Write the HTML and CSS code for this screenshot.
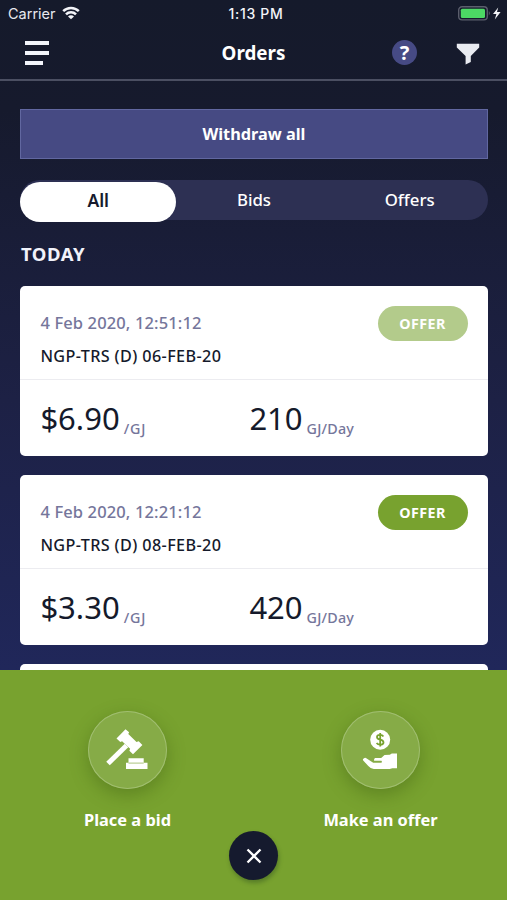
FILE: index.html
```html
<!DOCTYPE html>
<html lang="en">
<head>
<meta charset="utf-8">
<title>Orders</title>
<link rel="stylesheet" href="styles.css">
</head>
<body>
<div class="app">
  <div class="status">
    <div class="carrier"><span class="carrier-name">Carrier</span>
      <svg width="18" height="14" viewBox="0 0 18 14" fill="none" stroke="#f3f4f8" stroke-width="2.5"><path d="M1.2 5.2a11 11 0 0 1 15.6 0M4 8.4a7 7 0 0 1 10 0"/><path d="M9 13.3 6 10.6a4 4 0 0 1 6 0z" fill="#f3f4f8" stroke="none"/></svg>
    </div>
    <div class="clock">1:13 PM</div>
    <div class="power">
      <svg width="44" height="16" viewBox="0 0 44 16"><rect x=".7" y="1.7" width="28.6" height="13.2" rx="3.4" fill="none" stroke="#5b5e6c" stroke-width="1.4"/><rect x="2.8" y="3.7" width="24.2" height="9.2" rx="1.5" fill="#4cd964"/><path d="M30.8 6q2 2.2 0 4.5z" fill="#5b5e6c"/><path d="M40.2 2.5 35 9h3.4l-1.6 5.5 5.8-7.4h-3.6z" fill="#f3f4f8"/></svg>
    </div>
  </div>
  <header class="nav">
    <div class="menu"><i></i><i></i><i class="short"></i></div>
    <h1>Orders</h1>
    <div class="tools"><span class="help">?</span>
      <svg width="24" height="22" viewBox="0 0 24 22" fill="#e9ebf1"><path d="M.8.8h22.4v3.6L14.8 13v6l-5.2 2.4V13L.8 4.4z"/></svg>
    </div>
  </header>
  <main>
    <button class="withdraw"><span>Withdraw all</span></button>
    <div class="tabs"><div class="tab active"><span>All</span></div><div class="tab"><span>Bids</span></div><div class="tab"><span>Offers</span></div></div>
    <h2>TODAY</h2>
    <article class="card">
      <div class="top"><div><p class="date">4 Feb 2020, 12:51:12</p><p class="product">NGP-TRS (D) 06-FEB-20</p></div><span class="tag faded">OFFER</span></div>
      <div class="figures"><div><span class="amount">$6.90</span><span class="unit gas">/GJ</span></div><div><span class="amount">210</span><span class="unit">GJ/Day</span></div></div>
    </article>
    <article class="card">
      <div class="top"><div><p class="date">4 Feb 2020, 12:21:12</p><p class="product">NGP-TRS (D) 08-FEB-20</p></div><span class="tag">OFFER</span></div>
      <div class="figures"><div><span class="amount">$3.30</span><span class="unit gas">/GJ</span></div><div><span class="amount">420</span><span class="unit">GJ/Day</span></div></div>
    </article>
    <article class="card"></article>
  </main>
  <footer class="sheet">
    <div class="actions">
      <div class="action">
        <div class="disc"><svg width="78" height="78" viewBox="0 0 78 78" fill="#fff"><path d="M20 52.5 38.5 34.5" stroke="#fff" stroke-width="5" fill="none"/><path d="m37.5 18.2 3.6 3-.8 1.7 8.2 8.2 2.2-.8 3.7 3.6-9.4 9.4-3.6-3.6.7-2-8-7.4-1.8.7-3.8-3.4z"/><path d="M40.5 47.3h15.2v4.5h3.8V58H38v-6.2h2.5z"/><path d="M40.5 52.1h15.2" stroke="#86ab47" stroke-width=".7"/></svg></div>
        <span class="bid">Place a bid</span>
      </div>
      <div class="action">
        <div class="disc"><svg width="78" height="78" viewBox="0 0 78 78"><circle cx="39.2" cy="28.7" r="10" fill="#fff"/><path d="M42.4 25.4q-1-1.6-3.4-1.6-3 0-3 2.3 0 1.9 3.1 2.6 3.4.7 3.4 2.8 0 2.2-3.3 2.2-2.4 0-3.6-1.7M39.2 22v13.4" fill="none" stroke="#78a22f" stroke-width="1.8"/><path d="M23 47.2q1.2-.8 2.7.2l6.5 4.3h8.2q1-1 0-1.9h-7.2q-.6-1.2.8-2.7h6.2l3.3-3.2 5.3-.2 2-1.2H56v14.7h-4.6l-2.8.9H32.8q-3.2-.2-5.5-3L22 49.2q-.5-1.2 1-2z" fill="#fff"/></svg></div>
        <span class="make">Make an offer</span>
      </div>
    </div>
    <div class="close"><svg width="16" height="16" viewBox="0 0 16 16" fill="none" stroke="#fff" stroke-width="2.3"><path d="m1.5 1.5 13 13m0-13-13 13"/></svg></div>
  </footer>
</div>
</body>
</html>
```
FILE: styles.css
```css
* { box-sizing: border-box; margin: 0; padding: 0; }
body { font-family: "Noto Sans", sans-serif; color: #fff; }
.app { width: 507px; height: 900px; overflow: hidden; display: flex; flex-direction: column; background: linear-gradient(180deg, #151a2b 0, #161a2d 110px, #1d2145 400px, #20275a 670px); }
.status { height: 28px; flex: none; display: grid; grid-template-columns: 1fr 1fr 1fr; align-items: center; font: 15px Inter, sans-serif; color: #e8e9ef; }
.carrier { display: flex; align-items: center; gap: 6px; padding-left: 8px; }
.carrier-name { font-size: 14.5px; margin-top: -2px; }
.carrier svg { margin-top: -2px; }
.clock { text-align: center; font-weight: 500; font-size: 14px; letter-spacing: .7px; padding-left: 5px; margin-top: -1px; color: #f3f4f8; }
.power { display: flex; justify-content: flex-end; padding-right: 5px; margin-top: -2px; }
.nav { height: 53px; flex: none; border-bottom: 2px solid #4b4f62; display: grid; grid-template-columns: 1fr 1fr 1fr; }
.menu { padding: 13px 0 0 25px; display: flex; flex-direction: column; gap: 6px; }
.menu i { width: 24px; height: 4px; background: #f3f5fb; }
.menu .short { width: 18px; }
h1 { font-size: 18.8px; line-height: 50px; text-align: center; }
.tools { display: flex; justify-content: flex-end; gap: 39px; padding: 12px 27px 0 0; }
.tools svg { margin-top: 3px; }
.help { width: 25px; height: 25px; border-radius: 50%; background: #464a84; font-weight: 700; font-size: 20px; line-height: 25px; text-align: center; }
main { height: 589px; overflow: hidden; padding: 28px 19.5px 0 20.4px; flex: none; display: flex; flex-direction: column; }
.withdraw { height: 50px; flex: none; border: 1.5px solid #6167a0; background: #464a83; color: #fff; font: 700 16.3px "Noto Sans", sans-serif; }
.tabs { height: 40px; flex: none; margin-top: 21px; border-radius: 20px; background: #2d3053; display: grid; grid-template-columns: 1fr 1fr 1fr; font-size: 16.8px; font-weight: 500; line-height: 40px; text-align: center; }
.active { height: 40px; margin-top: 2px; border-radius: 20px; background: #fff; color: #161a2d; line-height: 36px; font-size: 17.5px; font-weight: 600; }
h2 { font-size: 18.5px; font-weight: 700; letter-spacing: .6px; line-height: 26px; margin: 21px 0 18.6px .5px; color: #f1f2fa; }
.card { height: 170px; flex: none; background: #fff; border-radius: 5px; margin-bottom: 19.2px; color: #151a2b; }
.top { height: 94.5px; padding: 20px 20px 0; border-bottom: 1.5px solid #ececf0; display: flex; justify-content: space-between; }
.date { font-size: 16.5px; letter-spacing: .13px; line-height: 34px; color: #75769b; font-weight: 500; }
.product { font-size: 16.2px; letter-spacing: .38px; line-height: 32px; font-weight: 500; }
.tag { width: 90px; height: 35px; border-radius: 18px; background: #78a22f; color: #fff; font-size: 14.3px; letter-spacing: .4px; font-weight: 700; line-height: 35px; text-align: center; }
.faded { background: #b3cb8b; }
.figures { display: grid; grid-template-columns: 209px 1fr; padding: 15px 20px 0; }
.figures > div { display: flex; align-items: baseline; gap: 4px; }
.amount { font-size: 31px; line-height: 46px; }
.unit { font-size: 14.3px; letter-spacing: .2px; font-weight: 500; color: #75769b; position: relative; top: 4px; }
.gas { letter-spacing: .8px; }
.sheet { height: 230px; flex: none; background: #78a22f; padding-top: 41px; display: flex; flex-direction: column; align-items: center; }
.actions { width: 507px; padding-left: 1px; display: grid; grid-template-columns: 1fr 1fr; }
.action { display: flex; flex-direction: column; align-items: center; font-size: 16.4px; font-weight: 700; line-height: 24px; }
.action > span { margin-top: 19px; }
.disc { width: 79px; height: 78px; border-radius: 50%; background: #86ab47; box-shadow: inset 0 0 0 1px #a0be70, 0 6px 18px rgba(50,80,10,.36); }
.disc svg { display: block; }
.close { margin-top: -1px; width: 49px; height: 49px; flex: none; border-radius: 50%; background: #151a2e; display: flex; align-items: center; justify-content: center; box-shadow: 1px 3px 4px rgba(40,70,30,.4); }
```
